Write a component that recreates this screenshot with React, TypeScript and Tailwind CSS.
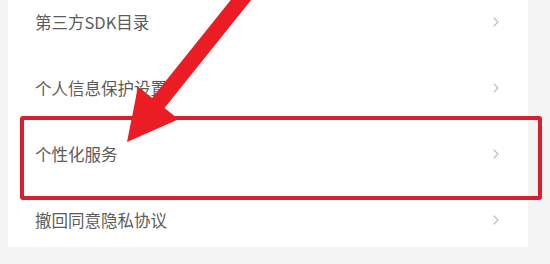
import { ChevronRight } from "lucide-react";

const items = ["第三方SDK目录", "个人信息保护设置", "个性化服务", "撤回同意隐私协议"];

export default function App() {
  return (
    <main
      className="relative w-[550px] h-[264px] overflow-hidden bg-[#f4f4f4]"
      style={{ fontFamily: '"Noto Sans CJK SC", "Noto Sans", sans-serif' }}
    >
      {/* 设置列表卡片 */}
      <section className="ml-[8px] mr-[22px] -mt-[11px] h-[258px] overflow-hidden bg-white">
        {items.map((label) => (
          <div key={label} className="flex items-center justify-between h-[66px] pl-[27px] pr-[24px]">
            <span className="text-[16.5px] leading-none text-[#5c5c5c]">{label}</span>
            <ChevronRight size={16} strokeWidth={1.6} className="text-[#bdbdbd]" />
          </div>
        ))}
      </section>

      {/* 标注框 */}
      <div className="absolute left-[20px] top-[116px] w-[522px] h-[84px] border-4 border-[#d6202e] rounded-[3px]" />

      {/* 标注箭头 */}
      <svg className="absolute inset-0" width="550" height="264" viewBox="0 0 550 264">
        <polygon
          points="250.8,-25 152.1,98 138,86.7 127,142 178.6,119.3 164.5,108 263.2,-15"
          fill="#ec1c24"
        />
      </svg>
    </main>
  );
}
